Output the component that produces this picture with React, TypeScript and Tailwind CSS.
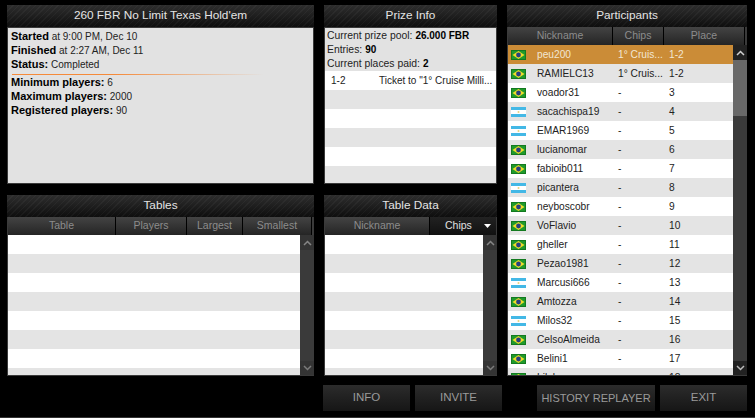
const FONT = { fontFamily: '"Liberation Sans", Arial, sans-serif' };

const stripes =
  "bg-[repeating-linear-gradient(135deg,rgba(255,255,255,0.035)_0px,rgba(255,255,255,0.035)_1px,transparent_1px,transparent_4px),linear-gradient(to_bottom,#2e2e2e,#0e0e0e)]";

function Title({ children }: { children: string }) {
  return (
    <div className={`h-[22px] shrink-0 flex items-center justify-center text-[11.8px] text-[#e4e4e4] ${stripes}`}>
      {children}
    </div>
  );
}

function Brazil() {
  return (
    <svg width="15" height="10" viewBox="0 0 15 10" className="shrink-0">
      <rect width="15" height="10" fill="#1f9a2c" />
      <rect x="0.5" y="0.5" width="14" height="9" fill="none" stroke="#137a1f" />
      <polygon points="7.5,1 13.5,5 7.5,9 1.5,5" fill="#f0dc28" />
      <circle cx="7.5" cy="5" r="2.4" fill="#28407f" />
    </svg>
  );
}

function Argentina() {
  return (
    <svg width="15" height="10" viewBox="0 0 15 10" className="shrink-0">
      <rect width="15" height="10" fill="#43b8e6" />
      <rect y="3" width="15" height="4" fill="#ffffff" />
      <circle cx="7.5" cy="5" r="1" fill="#e8d27a" />
    </svg>
  );
}

function ColHead({ label, className = "" }: { label: string; className?: string }) {
  return (
    <div className={`h-full flex items-center justify-center text-[10.5px] text-[#8c8c8c] bg-gradient-to-b from-[#444444] to-[#252525] border-r border-black ${className}`}>
      {label}
    </div>
  );
}

function Chevron({ up }: { up?: boolean }) {
  return (
    <svg width="9" height="6" viewBox="0 0 9 6">
      <path d={up ? "M1 5 L4.5 1.5 L8 5" : "M1 1 L4.5 4.5 L8 1"} fill="none" stroke={up ? "#d0d0d0" : "#bbbbbb"} strokeWidth="1.5" />
    </svg>
  );
}

function Scrollbar({ thumb }: { thumb?: boolean }) {
  return (
    <div className="w-[14px] shrink-0 flex flex-col bg-[#3a3a3a]">
      <div className={`h-[15px] shrink-0 flex items-center justify-center ${thumb ? "bg-[#222222]" : "bg-[#303030] opacity-50"}`}>
        <Chevron up />
      </div>
      {thumb && <div className="h-[56px] shrink-0 bg-[#686868]" />}
      <div className="flex-1" />
      <div className={`h-[14px] shrink-0 flex items-center justify-center ${thumb ? "bg-[#222222]" : "bg-[#303030] opacity-50"}`}>
        <Chevron />
      </div>
    </div>
  );
}

function EmptyRows({ count = 8 }: { count?: number }) {
  return (
    <div className="flex-1 overflow-hidden">
      {Array.from({ length: count }).map((_, i) => (
        <div key={i} className={`h-[19px] ${i % 2 === 0 ? "bg-white" : "bg-[#e4e4e4]"}`} />
      ))}
    </div>
  );
}

const players: [string, string, string, string][] = [
  ["br", "peu200", "1° Cruis...", "1-2"],
  ["br", "RAMIELC13", "1° Cruis...", "1-2"],
  ["br", "voador31", "-", "3"],
  ["ar", "sacachispa19", "-", "4"],
  ["ar", "EMAR1969", "-", "5"],
  ["br", "lucianomar", "-", "6"],
  ["br", "fabioib011", "-", "7"],
  ["ar", "picantera", "-", "8"],
  ["br", "neyboscobr", "-", "9"],
  ["br", "VoFlavio", "-", "10"],
  ["br", "gheller", "-", "11"],
  ["br", "Pezao1981", "-", "12"],
  ["ar", "Marcusi666", "-", "13"],
  ["br", "Amtozza", "-", "14"],
  ["ar", "Milos32", "-", "15"],
  ["br", "CelsoAlmeida", "-", "16"],
  ["br", "Belini1", "-", "17"],
  ["br", "Lilaka", "-", "18"],
];

function Button({ label, className = "" }: { label: string; className?: string }) {
  return (
    <div className={`h-[26px] flex items-center justify-center whitespace-nowrap text-[#9a9a9a] bg-gradient-to-b from-[#2c2c2c] to-[#161616] ${className}`}>
      {label}
    </div>
  );
}

export default function App() {
  return (
    <div style={FONT} className="w-[755px] h-[418px] overflow-hidden bg-black flex flex-col pt-[5px]">
      <div className="flex h-[371px] pl-[7px] gap-[10px]">
        <div className="w-[307px] flex flex-col gap-[11px]">
          <div className="h-[179px] flex flex-col bg-[#3a3a3a] overflow-hidden">
            <Title>260 FBR No Limit Texas Hold'em</Title>
            <div className="flex-1 m-[1px] bg-[#e2e2e2] px-[3px] text-[10px] text-[#222222]">
              <div className="h-[14px] mt-[1px] leading-[14px]"><b className="text-[11px] text-black">Started</b> at 9:00 PM, Dec 10</div>
              <div className="h-[14px] leading-[14px]"><b className="text-[11px] text-black">Finished</b> at 2:27 AM, Dec 11</div>
              <div className="h-[14px] leading-[14px]"><b className="text-[11px] text-black">Status:</b> Completed</div>
              <div className="h-[1px] mt-[3px] ml-[1px] w-[252px] bg-[linear-gradient(to_right,#f58a3a,#f58a3a_40%,transparent)]" />
              <div className="h-[14px] leading-[14px]"><b className="text-[11px] text-black">Minimum players:</b> 6</div>
              <div className="h-[14px] leading-[14px]"><b className="text-[11px] text-black">Maximum players:</b> 2000</div>
              <div className="h-[14px] leading-[14px]"><b className="text-[11px] text-black">Registered players:</b> 90</div>
            </div>
          </div>
          <div className="h-[181px] flex flex-col bg-[#3a3a3a] overflow-hidden">
            <Title>Tables</Title>
            <div className="h-[18px] shrink-0 flex pl-[1px] pr-[2px]">
              <ColHead label="Table" className="w-[108px]" />
              <ColHead label="Players" className="w-[71px]" />
              <ColHead label="Largest" className="w-[56px]" />
              <ColHead label="Smallest" className="flex-1" />
            </div>
            <div className="flex-1 flex min-h-0 pl-[1px] pb-[1px]">
              <EmptyRows />
              <Scrollbar />
            </div>
          </div>
        </div>

        <div className="w-[173px] flex flex-col gap-[11px]">
          <div className="h-[179px] flex flex-col bg-[#3a3a3a] overflow-hidden">
            <Title>Prize Info</Title>
            <div className="flex-1 flex flex-col m-[1px] bg-[#e2e2e2] text-[10.4px] text-[#222222] overflow-hidden min-h-0">
              <div className="h-[43px] shrink-0 px-[2px] pt-[1px]">
                <div className="h-[14px] leading-[14px]">Current prize pool: <b className="text-[10px] text-black">26.000 FBR</b></div>
                <div className="h-[14px] leading-[14px]">Entries: <b className="text-[10px] text-black">90</b></div>
                <div className="h-[14px] leading-[14px]">Current places paid: <b className="text-[10px] text-black">2</b></div>
              </div>
              <div className="h-[19px] shrink-0 bg-white flex items-center pl-[6px] whitespace-nowrap text-[10px]">
                <span className="w-[48px] shrink-0">1-2</span>
                <span>Ticket to "1° Cruise Milli...</span>
              </div>
              {[0, 1, 2, 3, 4].map((i) => (
                <div key={i} className={`h-[19px] shrink-0 ${i % 2 === 0 ? "bg-[#e4e4e4]" : "bg-white"}`} />
              ))}
            </div>
          </div>
          <div className="h-[181px] flex flex-col bg-[#3a3a3a] overflow-hidden">
            <Title>Table Data</Title>
            <div className="h-[18px] shrink-0 flex pl-[1px] pr-[1px]">
              <ColHead label="Nickname" className="w-[105px]" />
              <div className="flex-1 h-full relative flex items-center pl-[15px] text-[10.5px] text-[#e0e0e0] bg-gradient-to-b from-[#222222] to-[#111111]">
                Chips
                <svg width="7" height="4" viewBox="0 0 7 4" className="absolute right-[5px] top-[7px]">
                  <polygon points="0,0 7,0 3.5,4" fill="#ffffff" />
                </svg>
              </div>
            </div>
            <div className="flex-1 flex min-h-0 pl-[1px] pb-[1px]">
              <EmptyRows />
              <Scrollbar />
            </div>
          </div>
        </div>

        <div className="w-[240px] flex flex-col bg-[#3a3a3a] overflow-hidden">
          <Title>Participants</Title>
          <div className="h-[18px] shrink-0 flex pl-[1px] pr-[2px]">
            <ColHead label="Nickname" className="w-[105px]" />
            <ColHead label="Chips" className="w-[51px]" />
            <ColHead label="Place" className="flex-1" />
          </div>
          <div className="flex-1 flex min-h-0 pl-[1px] pb-[1px]">
            <div className="flex-1 overflow-hidden text-[10.2px]">
              {players.map(([flag, name, chips, place], i) => (
                <div
                  key={name}
                  className={`h-[19px] flex items-center pl-[3px] whitespace-nowrap ${
                    i === 0 ? "bg-[#cb8c37] text-[#f2e6d2]" : i % 2 === 1 ? "bg-[#e4e4e4] text-[#222222]" : "bg-white text-[#222222]"
                  }`}
                >
                  {flag === "br" ? <Brazil /> : <Argentina />}
                  <span className="w-[81px] ml-[11px]">{name}</span>
                  <span className="w-[51px]">{chips}</span>
                  <span>{place}</span>
                </div>
              ))}
            </div>
            <Scrollbar thumb />
          </div>
        </div>
      </div>

      <div className="flex mt-[9px] pl-[323px]">
        <Button label="INFO" className="w-[87px] text-[11.5px]" />
        <Button label="INVITE" className="w-[87px] ml-[5px] text-[11.5px]" />
        <Button label="HISTORY REPLAYER" className="w-[118px] ml-[35px] text-[11px]" />
        <Button label="EXIT" className="w-[87px] ml-[5px] text-[11.5px]" />
      </div>
      <div className="mt-auto h-[1px] bg-[#333333]" />
    </div>
  );
}
